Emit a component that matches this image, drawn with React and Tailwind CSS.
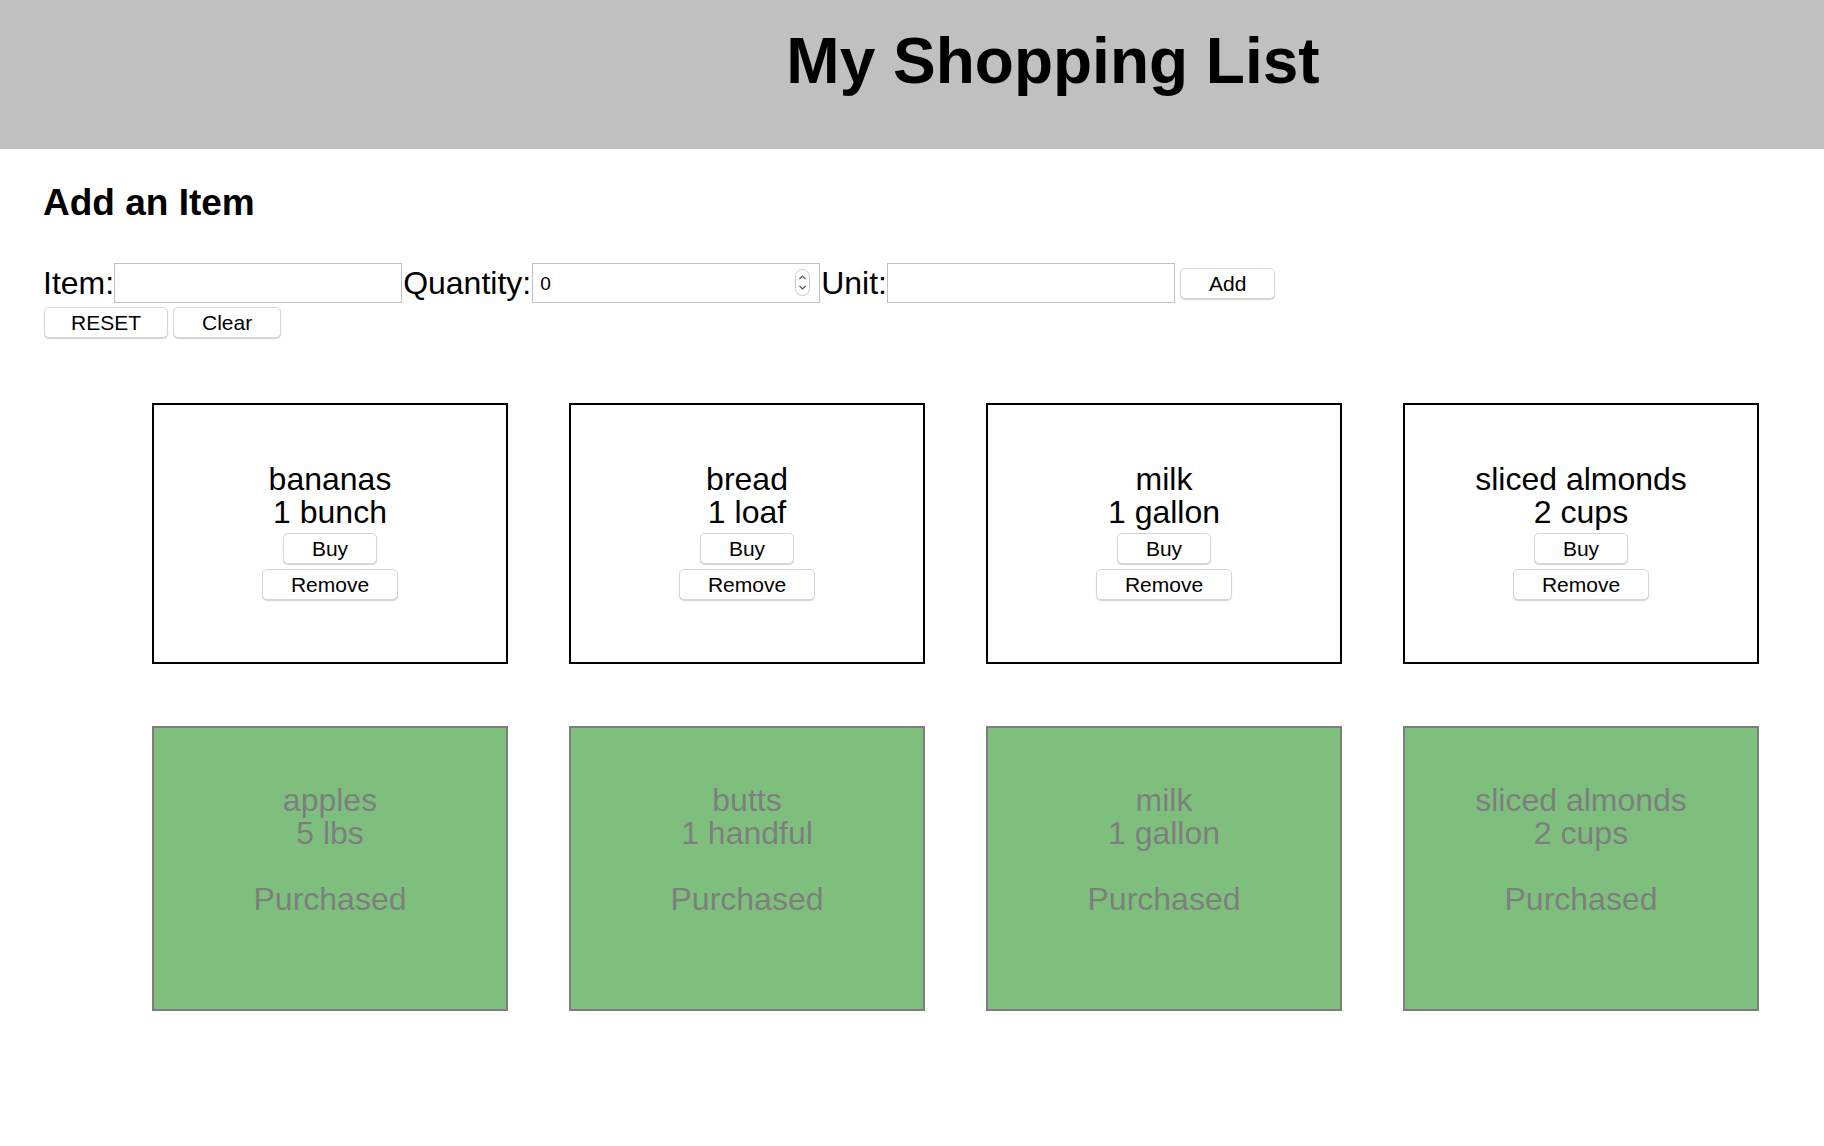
import React from 'react';

const toBuy = [
  { name: 'bananas', qty: '1 bunch' },
  { name: 'bread', qty: '1 loaf' },
  { name: 'milk', qty: '1 gallon' },
  { name: 'sliced almonds', qty: '2 cups' },
];

const bought = [
  { name: 'apples', qty: '5 lbs' },
  { name: 'butts', qty: '1 handful' },
  { name: 'milk', qty: '1 gallon' },
  { name: 'sliced almonds', qty: '2 cups' },
];

function Btn({ children, px = 'px-[28px]' }) {
  return (
    <button className={'bg-white border border-[#d6d6d6] rounded-[5px] shadow-[0_1px_1px_rgba(0,0,0,0.18)] text-[21px] leading-[23px] py-[3px] text-black ' + px}>
      {children}
    </button>
  );
}

function Spinner() {
  return (
    <svg className="absolute right-[10px] top-[6px]" width="15" height="27" viewBox="0 0 15 27">
      <rect x="0.5" y="0.5" width="14" height="26" rx="7" fill="#fff" stroke="#c8c8c8" />
      <path d="M4.5 10 L7.5 7 L10.5 10" fill="none" stroke="#555" strokeWidth="1.2" />
      <path d="M4.5 17 L7.5 20 L10.5 17" fill="none" stroke="#555" strokeWidth="1.2" />
    </svg>
  );
}

export default function App() {
  return (
    <div className="min-h-screen bg-white text-black font-['Liberation_Sans',Arial,sans-serif]">
      {/* header */}
      <div className="h-[149px] bg-[#c0c0c0] pt-[24px] pl-[282px] text-center">
        <h1 className="text-[64px] font-bold leading-[74px]">My Shopping List</h1>
      </div>

      <div className="pl-[43px]">
        <h3 className="mt-[32px] text-[37px] leading-[43px] font-bold">Add an Item</h3>

        <div className="mt-[39px] flex items-center h-[40px] text-[32px]">
          <span>Item:</span>
          <input className="w-[288px] h-[40px] border border-[#c0c0c0] bg-white px-[7px] text-[17px] outline-none" />
          <span className="ml-[1px]">Quantity:</span>
          <div className="relative flex ml-[1px]">
            <input
              readOnly
              value="0"
              className="w-[288px] h-[40px] border border-[#c0c0c0] bg-white px-[7px] pt-[2px] text-[19px] outline-none"
            />
            <Spinner />
          </div>
          <span className="ml-[1px]">Unit:</span>
          <input className="w-[288px] h-[40px] border border-[#c0c0c0] bg-white px-[7px] text-[17px] outline-none" />
          <div className="ml-[5px] flex">
            <Btn>Add</Btn>
          </div>
        </div>

        <div className="mt-[4px] flex gap-[5px] pl-[1px]">
          <Btn px="px-[26px]">RESET</Btn>
          <Btn>Clear</Btn>
        </div>
      </div>

      {/* items to buy */}
      <div className="mt-[65px] flex gap-[61px] pl-[152px]">
        {toBuy.map((it, i) => (
          <div key={i} className="w-[356px] h-[261px] border-2 border-black pt-[58px] text-center text-[32px] leading-[33px]">
            <div>{it.name}</div>
            <div>{it.qty}</div>
            <div className="mt-[4px] flex flex-col items-center gap-[5px]">
              <Btn>Buy</Btn>
              <Btn>Remove</Btn>
            </div>
          </div>
        ))}
      </div>

      {/* purchased */}
      <div className="mt-[62px] flex gap-[61px] pl-[152px]">
        {bought.map((it, i) => (
          <div key={i} className="w-[356px] h-[285px] border-2 border-black bg-[#008000] opacity-50 pt-[56px] text-center text-[32px] leading-[33px]">
            <div>{it.name}</div>
            <div>{it.qty}</div>
            <div className="mt-[33px]">Purchased</div>
          </div>
        ))}
      </div>
    </div>
  );
}
